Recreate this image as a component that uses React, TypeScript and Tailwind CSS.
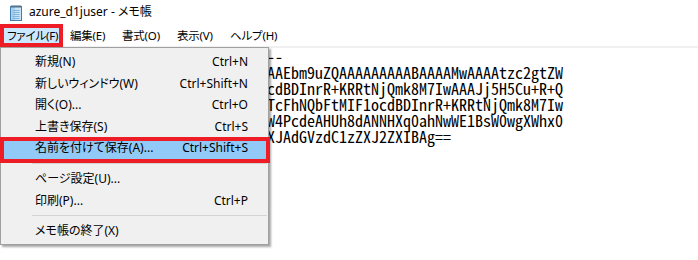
const editorLines = [
  "-----BEGIN OPENSSH PRIVATE KEY-----",
  "b3BlbnNzaC1rZXktdjEAAAAABG5vbmUAAAAEbm9uZQAAAAAAAAABAAAAMwAAAAtzc2gtZW",
  "QyNTUxOQAAACD1Pf3gKYHm0UjxQ9Ww0VzcdBDInrR+KRRtNjQmk8M7IwAAAJj5H5Cu+R+Q",
  "AAAEDN8r2xKcY1vZq7hT0wLmP3aE6uJbGTcFhNQbFtMIF1ocdBDInrR+KRRtNjQmk8M7Iw",
  "AAAAIFbW4PcdeAHUh8dANNHXq0ahNwWE1W4PcdeAHUh8dANNHXq0ahNwWE1BsW0wgXWhx0",
  "BqT7vNfLzQ2kR9aJmXw3pYc8HdGsE0uKlXJAdGVzdC1zZXJ2ZXIBAg==",
  "-----END OPENSSH PRIVATE KEY-----",
];

const menuBar = [
  { label: "ファイル(F)", w: "w-[63px]" },
  { label: "編集(E)", w: "w-[52px]" },
  { label: "書式(O)", w: "w-[55px]" },
  { label: "表示(V)", w: "w-[53px]" },
  { label: "ヘルプ(H)", w: "w-[60px]" },
];

type Item = { label: string; key?: string; h: string; active?: boolean };

const groups: Item[][] = [
  [
    { label: "新規(N)", key: "Ctrl+N", h: "h-[22px]" },
    { label: "新しいウィンドウ(W)", key: "Ctrl+Shift+N", h: "h-[21px]" },
    { label: "開く(O)...", key: "Ctrl+O", h: "h-[22px]" },
    { label: "上書き保存(S)", key: "Ctrl+S", h: "h-[21px]" },
    { label: "名前を付けて保存(A)...", key: "Ctrl+Shift+S", h: "h-[22px]", active: true },
  ],
  [
    { label: "ページ設定(U)...", h: "h-[22px]" },
    { label: "印刷(P)...", key: "Ctrl+P", h: "h-[21px]" },
  ],
  [{ label: "メモ帳の終了(X)", h: "h-[21px]" }],
];

function NotepadIcon() {
  return (
    <svg width="14" height="17" viewBox="0 0 14 17" className="shrink-0">
      <rect x="1.5" y="2.5" width="11" height="14" fill="#c9e4f6" stroke="#3f7fb3" />
      <rect x="2" y="3" width="4" height="13" fill="#a8d2ef" />
      <path d="M3.5 6.5h7M3.5 8.5h7M3.5 10.5h7M3.5 12.5h7M3.5 14.5h7" stroke="#7fb4db" />
      <path d="M3 1v3M5 1v3M7 1v3M9 1v3M11 1v3" stroke="#5a6b7a" />
    </svg>
  );
}

export default function App() {
  return (
    <div className="relative h-[260px] w-[698px] overflow-hidden bg-white font-['Noto_Sans','Noto_Sans_CJK_JP',sans-serif] text-[12px] text-black [font-feature-settings:'palt']">
      {/* title bar */}
      <div className="flex h-[24px] items-center gap-[6px] pl-[9px]">
        <NotepadIcon />
        <span className="text-[12px] leading-none">azure_d1juser - メモ帳</span>
      </div>

      {/* menu bar */}
      <div className="flex h-[22px] items-center pt-[2px] text-[11.5px] tracking-[-0.2px]">
        {menuBar.map((m, i) => (
          <div
            key={m.label}
            className={`flex h-[19px] shrink-0 items-center pl-[7px] ${m.w} ${i === 0 ? "bg-[#cce8ff]" : ""}`}
          >
            {m.label}
          </div>
        ))}
      </div>
      <div className="h-[2px] bg-[#f0f0f0]" />

      {/* editor */}
      <div className="whitespace-pre pl-[3px] font-['Noto_Sans_Mono_CJK_JP','Liberation_Mono',monospace] text-[16px] leading-[16px] [font-feature-settings:normal]">
        {editorLines.map((l, i) => (
          <div key={i}>{l}</div>
        ))}
      </div>

      {/* annotation on menu bar item */}
      <div className="absolute left-0 top-[24px] h-[23px] w-[63px] border-4 border-[#ee1c25]" />

      {/* dropdown */}
      <div className="absolute left-0 top-[47px] w-[269px] border border-[#a0a0a0] bg-[#f0f0f0] py-[3px] shadow-[2px_2px_2px_rgba(0,0,0,0.35)]">
        {groups.map((g, gi) => (
          <div key={gi}>
            {gi > 0 && (
              <div className="flex h-[9px] items-center pl-[31px] pr-[1px]">
                <div className="h-px w-full bg-[#d4d4d4]" />
              </div>
            )}
            {g.map((it) => (
              <div
                key={it.label}
                className={`flex items-center justify-between pl-[34px] pr-[20px] ${it.h} ${it.active ? "bg-[#91c9f7]" : ""}`}
              >
                <span>{it.label}</span>
                {it.key && <span>{it.key}</span>}
              </div>
            ))}
          </div>
        ))}
      </div>

      {/* annotation on menu item */}
      <div className="absolute left-0 top-[137px] h-[26px] w-[270px] border-4 border-[#ee1c25]" />
    </div>
  );
}
